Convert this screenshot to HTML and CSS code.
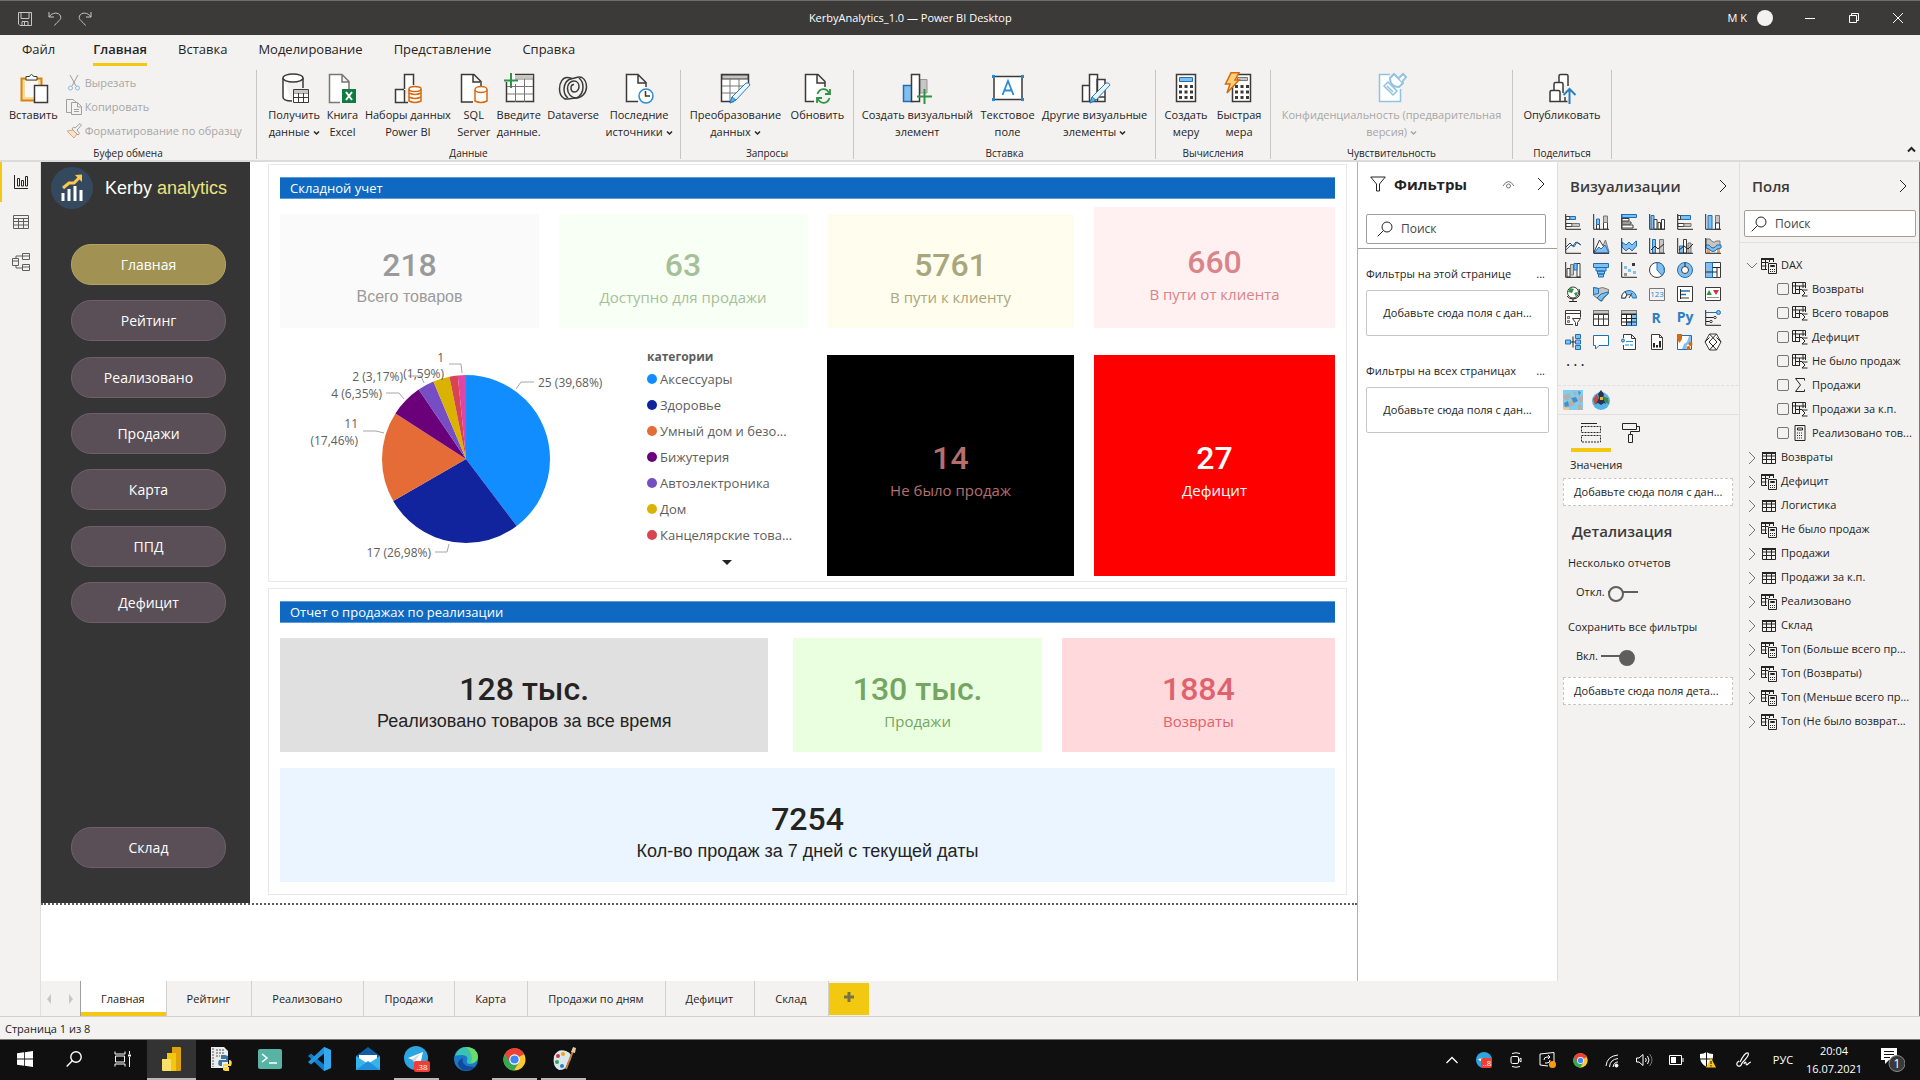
FILE: index.html
```html
<!DOCTYPE html>
<html lang="ru">
<head>
<meta charset="utf-8">
<meta name="viewport" content="width=device-width, initial-scale=1">
<title>KerbyAnalytics_1.0 — Power BI Desktop</title>
<link rel="stylesheet" href="styles.css">
</head>
<body>

<!-- shared icons -->
<svg class="defs" aria-hidden="true">
  <symbol id="i-table" viewBox="0 0 16 16"><path d="M1.500 2.500h13v11h-13zM1.500 6h13M1.500 9.500h13M5.500 3v10.500M10.500 3v10.500" class="ln"/><path d="M1 2h14v2H1z" fill="#252423"/></symbol>
  <symbol id="i-tcalc" viewBox="0 0 16 16"><path d="M6 11.500H.5V.5h12V4M.5 4.500h7M.5 8h5M4.500 1v10M8.500 1v3" class="ln"/><path d="M0 0h13v2H0z" fill="#252423"/><path d="M7.500 5.500h8v10h-8z" fill="#f3f2f1" stroke="#252423"/><path d="M9.500 7.500h4v1h-4z" class="ln"/><path d="M9 11.500h5M9 13.500h5" class="ln" stroke-dasharray="1 1"/></symbol>
  <symbol id="i-tsum" viewBox="0 0 16 16"><path d="M8 12.500H.5V1.500h13V7M.5 5h13M3.500 2v10.500M7.500 5v7M4 8.500h6M11 2v5" class="ln"/><path d="M15.500 9H10l3 3-3 3h5.500" class="ln"/></symbol>
  <symbol id="i-sum" viewBox="0 0 16 16"><path d="M12.500 3.500v-2h-9l5 6.500-5 6.500h9v-2" class="ln"/></symbol>
  <symbol id="i-calc" viewBox="0 0 16 16"><path d="M3 .5h10v15H3zM5.500 3h5v2h-5z" class="ln"/><path d="M5 8h6M5 10.500h6M5 13h6" class="ln" stroke-dasharray="1 1"/></symbol>
  <symbol id="i-right" viewBox="0 0 8 16"><path d="M1 2l6 6-6 6" class="ln"/></symbol>
  <symbol id="i-open" viewBox="0 0 12 8"><path d="M1 1l5 5 5-5" class="ln"/></symbol>
  <symbol id="i-caret" viewBox="0 0 7 6"><path d="M1 1.500l2.500 2.500L6 1.500" fill="none" stroke="currentColor" stroke-width="1.500"/></symbol>
  <symbol id="i-search" viewBox="0 0 16 16"><circle cx="10" cy="6" r="5" class="ln"/><path d="M6.500 9.500L.7 15.300" class="ln"/></symbol>
  <symbol id="i-chrome" viewBox="0 0 24 24"><circle cx="12" cy="12" r="11.500" fill="#fcc934"/><path d="M12 12L2 6.200A11.500 11.500 0 0 1 22 6.200z" fill="#ea4335"/><path d="M2 6.200A11.500 11.500 0 0 0 11.500 23.500l5-8.500L12 12z" fill="#34a853"/><path d="M12 6.500h10.200L22 6.200A11.500 11.500 0 0 0 2 6.200l5 8.500z" fill="#ea4335"/><circle cx="12" cy="12" r="5.500" fill="#fff"/><circle cx="12" cy="12" r="4.300" fill="#4285f4"/></symbol>
</svg>

<header class="titlebar">
  <div class="quick">
    <button aria-label="Сохранить"><svg width="16" height="16" viewBox="0 0 16 16"><path d="M1.500 1.500h13v13H3l-1.500-1.500zM4 1.500v6h8v-6M5 14.500v-4h6v4M7.500 11v3"/></svg></button>
    <button aria-label="Отменить"><svg width="16" height="16" viewBox="0 0 16 16"><path d="M2 1v5h5M2 6c3-5 10-5 11.500-1 1.500 4-3 5-6 9.500"/></svg></button>
    <button aria-label="Повторить"><svg width="16" height="16" viewBox="0 0 16 16"><path d="M14 1v5H9M14 6C11 1 4 1 2.500 5 1 9 5.500 10 8.500 14.500"/></svg></button>
  </div>
  <div class="title">KerbyAnalytics_1.0 — Power BI Desktop</div>
  <div class="window">
    <span>M K</span><i class="avatar"></i>
    <button aria-label="Свернуть"><svg width="12" height="12" viewBox="0 0 12 12"><path d="M1 6.500h10"/></svg></button>
    <button aria-label="Развернуть"><svg width="12" height="12" viewBox="0 0 12 12"><path d="M1.500 3.500h7v7h-7zM3.500 3V1.500h7v7H9"/></svg></button>
    <button aria-label="Закрыть"><svg width="12" height="12" viewBox="0 0 12 12"><path d="M1 1l10 10M11 1L1 11"/></svg></button>
  </div>
</header>

<nav class="menu">
  <button>Файл</button>
  <button class="on">Главная</button>
  <button>Вставка</button>
  <button>Моделирование</button>
  <button>Представление</button>
  <button>Справка</button>
</nav>

<div class="ribbon">
  <section class="group g-clip">
    <div class="tools">
      <button class="tool"><svg viewBox="0 0 32 32"><path d="M4.500 6.500h20v22h-20z" fill="#fbd99a" stroke="#d7830f" stroke-width="2"/><path d="M8 9h13v16H8z" fill="#faf9f8"/><path d="M9 8V4.500h3.500q2-4 4 0H20V8z" fill="#fff" stroke="#3b3a39"/><path d="M17.500 13.500h13v17h-13z" fill="#fff" stroke="#3b3a39" stroke-width="1.500"/></svg>Вставить</button>
      <div class="small-tools">
        <button disabled><svg viewBox="0 0 16 16"><path d="M4 0l6 11M12 0L6 11" stroke="#a19f9d"/><circle cx="4.500" cy="13" r="2" stroke="#8abbe0"/><circle cx="11.500" cy="13" r="2" stroke="#8abbe0"/></svg>Вырезать</button>
        <button disabled><svg viewBox="0 0 16 16"><path d="M5 13.500H.5V.5H7L10 3M5.500 3.500h6l4 4v8h-10zM11.500 4v4h4M8 10.500h5M8 12.500h5" stroke="#a19f9d"/></svg>Копировать</button>
        <button disabled><svg viewBox="0 0 16 16"><path d="M1 8l6-1 4 4-3 4z" fill="#fbe3c8" stroke="#e2a878"/><path d="M6 6l6 6 1.500-1.500L11 7l4.500-5-1.500-1.500L9 5 7.500 4z" stroke="#a19f9d"/></svg>Форматирование по образцу</button>
      </div>
    </div>
    <h2>Буфер обмена</h2>
  </section>
  <section class="group g-data">
    <div class="tools">
      <button class="tool"><svg viewBox="0 0 32 32"><path d="M5 6v19q0 4 9 4M25 6v10" class="dk"/><ellipse cx="15" cy="6" rx="10" ry="4" class="dk"/><path d="M15.500 17.500h15v13h-15zM15.500 21h15M15.500 25.500h15M20.500 21v9.500M25.500 21v9.500" stroke="#3b3a39" fill="#fff"/><path d="M16 18h14v3H16z" fill="#c8c6c4"/></svg>Получить<br>данные <svg class="caret"><use href="#i-caret"/></svg></button>
      <button class="tool"><svg viewBox="0 0 32 32"><path d="M14 30.500H3.500v-28H16l7 7V17M16 3v7h7" stroke="#797775" fill="#fff" stroke-width="1.500"/><path d="M16 17h14v14H16z" fill="#107c41"/><path d="M20 20l6 8M26 20l-6 8" stroke="#fff" stroke-width="2"/></svg>Книга<br>Excel</button>
      <button class="tool"><svg viewBox="0 0 32 32"><path d="M12.500 17V2.500h9V13M12 17.500H3.500v13H16M12.500 18v12" class="dk"/><path d="M17 17v12q6 3 12 0V17" fill="#fff" stroke="#d7690f" stroke-width="1.500"/><ellipse cx="23" cy="17" rx="6" ry="2.500" fill="#fff" stroke="#d7690f" stroke-width="1.500"/><path d="M17 21q6 3 12 0M17 25q6 3 12 0" fill="none" stroke="#d7690f" stroke-width="1.500"/></svg>Наборы данных<br>Power BI</button>
      <button class="tool"><svg viewBox="0 0 32 32"><path d="M15 30H3.500V2.500H16l7 7V14M15 3v7h7" class="dk"/><path d="M17 18v11q6 3 12 0V18" fill="#fff" stroke="#d7690f" stroke-width="1.500"/><ellipse cx="23" cy="17.500" rx="6" ry="3" fill="#fff" stroke="#d7690f" stroke-width="1.500"/></svg>SQL<br>Server</button>
      <button class="tool"><svg viewBox="0 0 32 32"><path d="M3.500 10v19.500h27v-27H12" fill="#fff" stroke="#3b3a39" stroke-width="1.500"/><path d="M12 3h18v3H12z" fill="#c8c6c4"/><path d="M12 7h18M4 14.500h26M4 22h26M12.500 12v18M21.500 7v23" stroke="#797775"/><path d="M1 8.500h14M8 1v15" stroke="#2f9447" stroke-width="2"/></svg>Введите<br>данные.</button>
      <button class="tool"><svg viewBox="0 0 32 32"><path d="M25 5.500c3 2 4.500 5.500 4.500 9.500 0 6-5 11-10 11-5.500 0-9-4.500-9-9.500C10.500 12 13.500 9 17 9c3 0 5 2.500 5 5.500S20 20 17.500 20 14 18 14 16s1-3.500 3-3.500M25 5.500C21 4 19 6 15.500 6.500 10 7 7 12 7 17c0 6 4 9 4 9" class="dv"/><path d="M7 26.500C4 24.500 2.500 21 2.500 17 2.500 10 6 5.500 10 5.500c2 0 3.500.5 5 1M7 26.500c3 1.500 6-.5 12.500-.5M19.500 26c4-2 6.500-6 6.500-11 0-4-1.500-7-4-9" class="dv"/></svg>Dataverse</button>
      <button class="tool"><svg viewBox="0 0 32 32"><path d="M15 29.500H3.500v-27H15l8 8V15M15 3v8h8" class="dk"/><circle cx="23" cy="24" r="7" fill="#fff" stroke="#2a8dd4" stroke-width="1.500"/><path d="M22.500 19v5H27" class="dk"/></svg>Последние<br>источники <svg class="caret"><use href="#i-caret"/></svg></button>
    </div>
    <h2>Данные</h2>
  </section>
  <section class="group g-query">
    <div class="tools">
      <button class="tool"><svg viewBox="0 0 32 32"><path d="M15 29.500H2.500v-27h27V12" fill="#fff" stroke="#3b3a39" stroke-width="1.500"/><path d="M3 3h26v4H3z" fill="#c8c6c4" stroke="#3b3a39"/><path d="M3 14h23M3 21h15M11 7v22M20 7v12" class="gr"/><path d="M11 31l2-6 14-14q3-1 4 2L17 28z" fill="#eaf4fc" stroke="#2a7fc1"/><path d="M11 31l2-6 4 3z" fill="#5fb0ec" stroke="#2a7fc1"/></svg>Преобразование<br>данных <svg class="caret"><use href="#i-caret"/></svg></button>
      <button class="tool"><svg viewBox="0 0 32 32"><path d="M13 29.500H4.500v-27H17l7 7V15M16 3v8h8" class="dk"/><path d="M29 17v5h-5M16 31v-5h5M16.500 22c2-6 9-7 12 0M28.500 26c-2 6-9 7-12 0" fill="none" stroke="#2f9447" stroke-width="1.800"/></svg>Обновить</button>
    </div>
    <h2>Запросы</h2>
  </section>
  <section class="group g-insert">
    <div class="tools">
      <button class="tool"><svg viewBox="0 0 32 32"><path d="M2.500 13.500h9v16h-9z" fill="#83bfee" stroke="#1d70b8" stroke-width="1.500"/><path d="M19 7.500h7V21h-7z" fill="#c8c6c4" stroke="#979593"/><path d="M10.500 2.500h8v27h-8z" class="dk"/><path d="M16 24.500h15M23.500 17v15" stroke="#2f9447" stroke-width="2"/></svg>Создать визуальный<br>элемент</button>
      <button class="tool"><svg viewBox="0 0 32 32"><path d="M2 4.500h28v23H2z" class="dk"/><path d="M10.500 23l5.500-14 5.500 14M12.500 18.500h7" fill="none" stroke="#2a8dd4" stroke-width="1.800"/><path d="M0 3h3v3H0zM29 3h3v3h-3zM0 26h3v3H0zM29 26h3v3h-3z" fill="#1d8ad6"/></svg>Текстовое<br>поле</button>
      <button class="tool"><svg viewBox="0 0 32 32"><path d="M3.500 13.500h7v16h-7zM18 7.500h8V25H18zM10.500 2.500h8v27h-8zM18 29.500h8V24" class="dk"/><path d="M11 31l2-6 14-14q3-1 4 2L17 28z" fill="#eaf4fc" stroke="#2a7fc1"/><path d="M11 31l2-6 4 3z" fill="#5fb0ec" stroke="#2a7fc1"/></svg>Другие визуальные<br>элементы <svg class="caret"><use href="#i-caret"/></svg></button>
    </div>
    <h2>Вставка</h2>
  </section>
  <section class="group g-calc">
    <div class="tools">
      <button class="tool"><svg viewBox="0 0 32 32"><path d="M6.500 2.500h19v27h-19z" class="dk"/><path d="M9.500 5.500h13v4h-13z" fill="#83bfee" stroke="#1d70b8"/><path d="M9 14.500h14M9 20h14M9 25.500h14" stroke="#3b3a39" stroke-width="3" stroke-dasharray="3 2.500"/></svg>Создать<br>меру</button>
      <button class="tool"><svg viewBox="0 0 32 32"><path d="M9.500 2.500h18v27h-18z" class="dk"/><path d="M14.500 5.500h10v3h-10z" fill="#c8c6c4" stroke="#797775"/><path d="M12 14.500h14M12 20h14M12 25.500h14" stroke="#3b3a39" stroke-width="3" stroke-dasharray="3 2.500"/><path d="M8 .8h8L12 8h4L4 21l3-9H2.500z" fill="#fbd27a" stroke="#d7690f" stroke-width="1.500"/></svg>Быстрая<br>мера</button>
    </div>
    <h2>Вычисления</h2>
  </section>
  <section class="group g-sens">
    <div class="tools">
      <button class="tool" disabled><svg viewBox="0 0 32 32"><path d="M15 2.500H4.500v27h21V17" fill="#fff" stroke="#90c3e0" stroke-width="1.500"/><path d="M9 14l4-4 9 9-4 4zM12 14l6 6" fill="#fff" stroke="#90c3e0" stroke-width="1.500"/><path d="M15 6l4-4 9 9-4 4q-9 0-9-9z" fill="#fff" stroke="#90c3e0" stroke-width="2"/><path d="M24 6l4-4 3 3-4 5" fill="#fff" stroke="#90c3e0" stroke-width="2"/></svg>Конфиденциальность (предварительная<br>версия) <svg class="caret"><use href="#i-caret"/></svg></button>
    </div>
    <h2>Чувствительность</h2>
  </section>
  <section class="group g-share">
    <div class="tools">
      <button class="tool"><svg viewBox="0 0 32 32"><path d="M13 10V4q0-1.500 1.500-1.500h6q1.500 0 1.500 1.500v10M8 18v-6q0-1.500 1.500-1.500h6q1.500 0 1.500 1.500v9M13.500 29.500h8M14 29V20q0-1.500-1.500-1.500h-7Q4 18.500 4 20v9.500h15V25" class="dk"/><path d="M23.500 32V17M17.500 23l6-6 6 6" fill="none" stroke="#2a7fc1" stroke-width="2"/></svg>Опубликовать</button>
    </div>
    <h2>Поделиться</h2>
  </section>
  <button class="collapse" aria-label="Свернуть ленту"><svg width="9" height="7" viewBox="0 0 9 7"><path d="M1 5.500L4.500 2 8 5.500" fill="none" stroke="#252423" stroke-width="2"/></svg></button>
</div>

<div class="workspace">
  <nav class="rail">
    <button class="on" aria-label="Отчет"><svg width="16" height="16" viewBox="0 0 16 16"><path d="M1.500 1v13.500H15M4.500 12V4.500h2V12zM8.500 12V6.500h2V12zM12.500 12V2.500h2V12z" stroke="#252423"/></svg></button>
    <button aria-label="Данные"><svg width="16" height="16" viewBox="0 0 16 16"><path d="M.5 1.500h15v13H.5zM.5 4.500h15M.5 7.500h15M.5 11h15M5.500 4.500v10M10.500 4.500v10" stroke="#605e5c"/></svg></button>
    <button aria-label="Модель"><svg width="18" height="18" viewBox="0 0 18 18"><path d="M.5 5.500h6v7h-6zM.5 8h6M10.500.5h7v6h-7zM10.500 3h7M10.500 11.500h7v6h-7zM10.500 14h7M4 5V3h6M4 13v2h6" stroke="#605e5c"/></svg></button>
  </nav>

  <div class="editor">
    <div class="canvas">
      <main class="report">
        <aside class="report-nav">
          <div class="brand">
            <svg width="42" height="42" viewBox="0 0 42 42"><circle cx="21" cy="21" r="21" fill="#34495e"/><path d="M12 34v-8M18 34V22M24 34V19M30 34V23" stroke="#fff" stroke-width="3"/><path d="M12 21l6-5h5l6-6" fill="none" stroke="#fdc84b" stroke-width="3"/><path d="M24 8l7-.5V15z" fill="#fdc84b"/></svg>
            <span>Kerby <b>analytics</b></span>
          </div>
          <div class="pages">
            <a class="on" href="#main">Главная</a>
            <a href="#rating">Рейтинг</a>
            <a href="#sold">Реализовано</a>
            <a href="#sales">Продажи</a>
            <a href="#map">Карта</a>
            <a href="#ppd">ППД</a>
            <a href="#deficit">Дефицит</a>
          </div>
          <a class="stock" href="#stock">Склад</a>
        </aside>

        <div class="boards">
          <section class="board">
            <h1>Складной учет</h1>
            <div class="stats">
              <div class="card c-total"><strong>218</strong><span>Всего товаров</span></div>
              <div class="card c-free"><strong>63</strong><span>Доступно для продажи</span></div>
              <div class="card c-way"><strong>5761</strong><span>В пути к клиенту</span></div>
              <div class="card c-back"><strong>660</strong><span>В пути от клиента</span></div>
              <div class="chart">
                <svg viewBox="0 -7 340 228" width="340" height="228">
                  <g class="pie" transform="rotate(-90 186 104)">
                    <circle cx="186" cy="104" r="42" pathLength="63" stroke="#118dff" stroke-dasharray="25 63"/>
                    <circle cx="186" cy="104" r="42" pathLength="63" stroke="#12239e" stroke-dasharray="17 63" stroke-dashoffset="-25"/>
                    <circle cx="186" cy="104" r="42" pathLength="63" stroke="#e66c37" stroke-dasharray="11 63" stroke-dashoffset="-42"/>
                    <circle cx="186" cy="104" r="42" pathLength="63" stroke="#6b007b" stroke-dasharray="4 63" stroke-dashoffset="-53"/>
                    <circle cx="186" cy="104" r="42" pathLength="63" stroke="#744ec2" stroke-dasharray="2 63" stroke-dashoffset="-57"/>
                    <circle cx="186" cy="104" r="42" pathLength="63" stroke="#d9b300" stroke-dasharray="2 63" stroke-dashoffset="-59"/>
                    <circle cx="186" cy="104" r="42" pathLength="63" stroke="#d64550" stroke-dasharray="1 63" stroke-dashoffset="-61"/>
                    <circle cx="186" cy="104" r="42" pathLength="63" stroke="#e044a7" stroke-dasharray="1 63" stroke-dashoffset="-62"/>
                  </g>
                  <path class="leads" d="M236 34l5-7h13M169 9h12l1 9M128 21h13l3 7M106 38h13l5 6M83 76h13l8 2M155 197h12l2-8"/>
                  <g class="labels">
                    <text x="258" y="32">25 (39,68%)</text>
                    <text x="164" y="7" text-anchor="end">1</text>
                    <text x="164" y="23" text-anchor="end">(1,59%)</text>
                    <text x="123" y="26" text-anchor="end">2 (3,17%)</text>
                    <text x="102" y="43" text-anchor="end">4 (6,35%)</text>
                    <text x="78" y="73" text-anchor="end">11</text>
                    <text x="78" y="90" text-anchor="end">(17,46%)</text>
                    <text x="151" y="202" text-anchor="end">17 (26,98%)</text>
                  </g>
                </svg>
                <div class="legend">
                  <h3>категории</h3>
                  <ul>
                    <li class="k1">Аксессуары</li>
                    <li class="k2">Здоровье</li>
                    <li class="k3">Умный дом и безо...</li>
                    <li class="k4">Бижутерия</li>
                    <li class="k5">Автоэлектроника</li>
                    <li class="k6">Дом</li>
                    <li class="k7">Канцелярские това...</li>
                  </ul>
                  <i class="more"></i>
                </div>
              </div>
              <div class="card big c-none"><strong>14</strong><span>Не было продаж</span></div>
              <div class="card big c-def"><strong>27</strong><span>Дефицит</span></div>
            </div>
          </section>

          <section class="board">
            <h1>Отчет о продажах по реализации</h1>
            <div class="sales">
              <div class="card c-sold"><strong>128 тыс.</strong><span>Реализовано товаров за все время</span></div>
              <div class="card c-sales"><strong>130 тыс.</strong><span>Продажи</span></div>
              <div class="card c-ret"><strong>1884</strong><span>Возвраты</span></div>
              <div class="card c-week"><strong>7254</strong><span>Кол-во продаж за 7 дней с текущей даты</span></div>
            </div>
          </section>
        </div>
      </main>
    </div>

    <aside class="filters">
      <header>
        <svg width="16" height="16" viewBox="0 0 16 16"><path d="M.7 1h14.600L9.500 8v7H6.500V8z" class="ln"/></svg>
        <h2>Фильтры</h2>
        <svg width="13" height="13" viewBox="0 0 13 13"><path d="M1 8q5.500-9 11 0" fill="none" stroke="#797775"/><circle cx="6.500" cy="8" r="2" fill="none" stroke="#797775"/></svg>
        <svg width="8" height="16"><use href="#i-right"/></svg>
      </header>
      <label class="search"><svg width="16" height="16"><use href="#i-search"/></svg><input type="text" placeholder="Поиск" aria-label="Поиск фильтров"></label>
      <div class="filter-list">
        <h3>Фильтры на этой странице <span>...</span></h3>
        <div class="drop">Добавьте сюда поля с дан...</div>
        <h3>Фильтры на всех страницах <span>...</span></h3>
        <div class="drop">Добавьте сюда поля с дан...</div>
      </div>
    </aside>

    <footer class="sheets">
      <span class="arrows"><i class="prev"></i><i class="next"></i></span>
      <button class="on">Главная</button>
      <button>Рейтинг</button>
      <button>Реализовано</button>
      <button>Продажи</button>
      <button>Карта</button>
      <button>Продажи по дням</button>
      <button>Дефицит</button>
      <button>Склад</button>
      <button class="add" aria-label="Новая страница"><svg width="12" height="12" viewBox="0 0 12 12"><path d="M6 1v10M1 6h10" stroke="#797244" stroke-width="3"/></svg></button>
    </footer>
  </div>

  <aside class="visuals">
    <header><h2>Визуализации</h2><svg width="8" height="16"><use href="#i-right"/></svg></header>
    <div class="viz-grid">
      <svg viewBox="0 0 16 16"><path d="M.7 0v15.300H16" class="ln"/><path d="M1 2.500h4v3H1z" class="w"/><path d="M5 2.500h5.500v3H5z" class="b"/><path d="M1 9.500h6v3H1z" class="w"/><path d="M7 9.500h7.500v3H7z" class="g"/></svg>
      <svg viewBox="0 0 16 16"><path d="M.7 0v15.300H16" class="ln"/><path d="M3.500 10.500h3V15h-3z" class="w"/><path d="M3.500 5h3v5.500h-3z" class="b"/><path d="M10.500 8.500h4V15h-4z" class="w"/><path d="M10.500 2h4v6.500h-4z" class="g"/></svg>
      <svg viewBox="0 0 16 16"><path d="M.7 0v15.300H16" class="ln"/><path d="M1 .5h14.500v3H1z" class="b"/><path d="M1 4.500h7v2.500H1zM1 8h9v2H1zM1 11h11v3H1z" class="w"/></svg>
      <svg viewBox="0 0 16 16"><path d="M.7 0v15.300H16" class="ln"/><path d="M2 1.500h3V15H2z" class="b"/><path d="M5 5.500h3V15H5zM9 8.500h2.500V15H9zM12.500 5.500h3V15h-3z" class="w"/></svg>
      <svg viewBox="0 0 16 16"><path d="M.7 0v15.300H16" class="ln"/><path d="M3.500 1.500h10v4h-10z" class="b"/><path d="M1 9.500h6v3H1zM1 1.500h2.500v4H1z" class="w"/><path d="M7 9.500h7v3H7z" class="g"/></svg>
      <svg viewBox="0 0 16 16"><path d="M.7 0v15.300H16" class="ln"/><path d="M3 1.500h4V15H3z" class="b"/><path d="M10.500 1.500h4V9h-4z" class="g"/><path d="M10.500 9h4v6h-4z" class="w"/></svg>
      <svg viewBox="0 0 16 16"><path d="M.7 0v15.300H16" class="ln"/><path d="M1 9l4-4 3 3 3-4 5 3" fill="none" stroke="#3b3a39"/><path d="M1 12l5-5 3 2 3-5 3 2" fill="none" stroke="#1d70b8"/></svg>
      <svg viewBox="0 0 16 16"><path d="M9 10l3.500-8L16 14z" class="g"/><path d="M1 14L6.500 2 12 11z" class="w"/><path d="M1 15l5-6 2 2 4-4 4 8z" class="b"/><path d="M.7 0v15.300H16" class="ln"/></svg>
      <svg viewBox="0 0 16 16"><path d="M1 4l4 3 3-3 3 3 4-4h.5v5L11 13 8 10l-3 3-4-4z" class="b"/><path d="M.7 0v15.300H16" class="ln"/></svg>
      <svg viewBox="0 0 16 16"><path d="M3.500 1.500h3V15h-3z" class="b"/><path d="M10.500 1.500h4V15h-4z" class="g"/><path d="M2 12l4-4 3 3 6-5" fill="none" stroke="#252423"/><path d="M.7 0v15.300H16" class="ln"/></svg>
      <svg viewBox="0 0 16 16"><path d="M2.500 8h4v7h-4z" class="b"/><path d="M6.500 1.500h3V15h-3z" class="w"/><path d="M11 5h3v10h-3z" class="g"/><path d="M2 12l5-4 4 3 5-5" fill="none" stroke="#252423"/><path d="M.7 0v15.300H16" class="ln"/></svg>
      <svg viewBox="0 0 16 16"><path d="M1 1h4q3 5 6 2h4v5h-3q-4 5-8 0H1z" class="g"/><path d="M2 10h3v5H2zM12 10h3v5h-3z" fill="#f29f4b"/><path d="M1 7h3q4 6 8 0h4v3l-4 1q-4 5-8 0l-3-1z" class="b"/><path d="M.7 0v15.300H16" class="ln"/></svg>

      <svg viewBox="0 0 16 16"><path d="M2 6.500h3V15H2zM12 1.500h3V15h-3z" class="w"/><path d="M5.500 2.500h3V13h-3z" class="g"/><path d="M9 1.500h3V8H9z" class="b"/><path d="M.7 0v15.300H16" class="ln"/></svg>
      <svg viewBox="0 0 16 16"><path d="M.5 1.500h15v4H.5zM3 5.500h10v3.500H3zM4.500 9h7v3h-7zM5.500 12h5v3h-5z" class="b"/></svg>
      <svg viewBox="0 0 16 16"><path d="M.7 0v15.300H16" class="ln"/><path d="M3 4h3v3H3zM7 7h3v3H7zM12 9h3v3h-3z" fill="#83bfee"/><path d="M11 1h3v3h-3z" fill="#3b3a39"/><path d="M3 11h3v3H3z" fill="#979593"/></svg>
      <svg viewBox="0 0 16 16"><circle cx="8" cy="8" r="7.500" class="w"/><path d="M8 .5a7.500 7.500 0 0 1 5 13L8 8z" class="b"/></svg>
      <svg viewBox="0 0 16 16"><circle cx="8" cy="8" r="7.500" class="b"/><circle cx="8" cy="8" r="3.500" class="w"/><path d="M8 .5v4" class="ln"/></svg>
      <svg viewBox="0 0 16 16"><path d="M.5.500h15v15H.5z" class="w"/><path d="M.5.500h7v15h-7z" class="b"/><path d="M.5 10h7M7.500 5.500h8M12 5.500v10M7.500 10H12" class="ln"/></svg>
      <svg viewBox="0 0 16 16"><circle cx="8" cy="6.500" r="5.500" class="w"/><path d="M5 2l4 1-2 4-4-1zM9 7l4-1-2 5z" fill="#2f9447"/><path d="M14 3q3 9-6 10-4 0-6-3M8 13v2.500M4 15.500h8" class="ln"/></svg>
      <svg viewBox="0 0 16 16"><path d="M.5 1.500l5 1 4-1 6 2v4l-4 4-3 4-4-3-4-3z" class="g"/><path d="M.5 1.500l5 1v5l-5 1zM8 8l7-2v2l-4 3-3 4-4-3z" class="b"/></svg>
      <svg viewBox="0 0 16 16"><path d="M.5 12a7.500 7.500 0 0 1 15 0h-4a3.500 3.500 0 0 0-7 0z" class="b"/><path d="M.5 12A7.500 7.500 0 0 1 4 5.500L6 9q-1.500 1-1.500 3zM8 12l3-5" class="w"/></svg>
      <svg viewBox="0 0 16 16"><path d="M.5 2.500h15v12H.5z" class="g2"/><text x="8" y="11" text-anchor="middle" class="num">123</text></svg>
      <svg viewBox="0 0 16 16"><path d="M.5.500h15v15H.5z" class="w"/><path d="M3.500 3v10" class="ln"/><path d="M4 5h9M4 8.500h5" stroke="#1d70b8" stroke-width="1.500"/><path d="M4 12h8" stroke="#3b3a39"/></svg>
      <svg viewBox="0 0 16 16"><path d="M.5 1.500h15v13H.5z" class="w"/><path d="M1.500 9l2.500-5 3 5z" fill="#2f9447"/><path d="M8 4h6l-3 5z" fill="#d13438"/><path d="M2 11.500h12" stroke="#979593"/></svg>
      <svg viewBox="0 0 16 16"><path d="M8 14.500H.5V.5h15v7M.5 3.500h15" class="w"/><path d="M2.500 6.500h2v2h-2zM2.500 10.500h2v2h-2z" class="g"/><path d="M7.500 8.500h8l-3 4v3h-2v-3z" class="w"/></svg>
      <svg viewBox="0 0 16 16"><path d="M.5.500h15v15H.5zM.5 4.500h15M.5 9h15M5.500 4.500v11M10.500 4.500v11" class="w"/><path d="M.5.500h15v3H.5z" class="g"/></svg>
      <svg viewBox="0 0 16 16"><path d="M.5.500h15v15H.5z" class="w"/><path d="M10.500 4.500h5v11h-10V12h5z" class="b"/><path d="M.5 4.500h15M.5 8.500h15M.5 12h15M5.500 4.500v11M10.500 4.500v11" class="ln"/><path d="M.5.500h15v3H.5z" class="g"/></svg>
      <svg viewBox="0 0 16 16"><text x="7" y="13" text-anchor="middle" class="lang">R</text></svg>
      <svg viewBox="0 0 16 16"><text x="8" y="12" text-anchor="middle" class="lang">Py</text></svg>
      <svg viewBox="0 0 16 16"><path d="M.7 0v15.300H16M1 7.500h9M1 11.500h4" class="ln"/><path d="M1 2.500h11" stroke="#1d70b8"/><circle cx="13.500" cy="2.500" r="2" class="b"/><circle cx="10" cy="7.500" r="1.200" class="w"/><circle cx="6" cy="11.500" r="1.200" class="w"/></svg>

      <svg viewBox="0 0 16 16"><path d="M5 8h5M8 2.500v11" class="ln"/><path d="M.5 6h5v4h-5zM10.500.5h5v4h-5zM10.500 6h5v4h-5zM10.500 11.500h5v4h-5z" class="b"/></svg>
      <svg viewBox="0 0 16 16"><path d="M.5 1.500h15v10H6L2.500 15v-3.500h-2z" fill="#fff" stroke="#1d70b8"/></svg>
      <svg viewBox="0 0 16 16"><path d="M2.500 4V.5h8l4 4v11h-12V11M10.500.5v4h4" class="w"/><circle cx="2" cy="6.500" r="1.500" class="b"/><path d="M5 7.500h7M4 11h4M9 11h3" stroke="#1d8ad6"/></svg>
      <svg viewBox="0 0 16 16"><path d="M2.500.5h8l3 3v12h-11zM10.500.5v3h3" class="w"/><path d="M5 9v4.500M8 11v2.500M11 7v6.500" stroke="#252423" stroke-width="2"/></svg>
      <svg viewBox="0 0 16 16"><path d="M.5 1.500h14v14H.5z" fill="#fff" stroke="#1d70b8"/><path d="M12 2h2v7l-4 2-1 4H5l2-5 3-2z" fill="#83bfee"/><path d="M0 0h5v5L2.500 9 0 5z" fill="#d7690f"/><circle cx="13.500" cy="10" r="2" fill="#d7690f"/><circle cx="11.500" cy="14" r="2" fill="#d7690f"/></svg>
      <svg viewBox="0 0 16 16"><path d="M4.500 0h7L16 8l-4.500 8h-7L0 8z" class="w"/><path d="M4.500 0L12 8l-4 4-4-4 7.500-8M4.500 16L8 12l3.500 4M0 8l4.500-4.500M16 8l-4.500-4.500" class="ln"/></svg>
    </div>
    <div class="dots">...</div>
    <div class="custom">
      <svg width="20" height="20" viewBox="0 0 20 20"><path d="M0 0h20v20H0z" fill="#7fcdf0"/><path d="M0 6l6-3 2 5-5 3zM9 1l5 1-2 5zM15 8l5-3v7l-4 1zM5 12l5-2 2 5-6 2zM14 15l4-1 2 6h-5z" fill="#b3b0ad"/><path d="M8 8l5-1 2 4-4 2zM1 13l4-2 1 5-4 1zM15 1l3 1-2 4z" fill="#4a8fc4"/><path d="M0 17l6 1v2H0z" fill="#f9c784"/></svg>
      <svg width="20" height="20" viewBox="0 0 20 20"><circle cx="10" cy="11" r="9" fill="#56b3ea"/><path d="M2 9l4-5 2 6-4 5z" fill="#c04b34"/><path d="M11 6l6 2 1 6-4-2z" fill="#3c8a46"/><path d="M10 0l3 4-1 4 3 6-2-1-3 2-3-2-2 1 3-6-1-4z" fill="#2c3550"/><path d="M9 7h3v3H9z" fill="#e0b53c"/></svg>
    </div>
    <div class="viz-tabs">
      <button class="on" aria-label="Поля"><svg width="20" height="20" viewBox="0 0 20 20"><path d="M0 .5h16" class="ln"/><path d="M.5 3.500h19v6H.5zM.5 12.500h19v6.500H.5z" class="ln" stroke-dasharray="2 1"/></svg></button>
      <button aria-label="Формат"><svg width="20" height="20" viewBox="0 0 20 20"><path d="M1.500.5h14v6h-14zM15.500 3.500h3v5h-9v3M7.500 11.500h4v8h-4z" class="ln"/></svg></button>
    </div>
    <h3 class="values">Значения</h3>
    <div class="well">Добавьте сюда поля с дан...</div>
    <h2 class="drill">Детализация</h2>
    <h3>Несколько отчетов</h3>
    <label class="toggle">Откл. <input type="checkbox"></label>
    <h3>Сохранить все фильтры</h3>
    <label class="toggle">Вкл. <input type="checkbox" checked></label>
    <div class="well">Добавьте сюда поля дета...</div>
  </aside>

  <aside class="fields">
    <header><h2>Поля</h2><svg width="8" height="16"><use href="#i-right"/></svg></header>
    <label class="search"><svg width="16" height="16"><use href="#i-search"/></svg><input type="text" placeholder="Поиск" aria-label="Поиск полей"></label>
    <ul class="tree">
      <li><svg class="arr down"><use href="#i-open"/></svg><svg><use href="#i-tcalc"/></svg>DAX
        <ul>
          <li><label><input type="checkbox"><svg><use href="#i-tsum"/></svg>Возвраты</label></li>
          <li><label><input type="checkbox"><svg><use href="#i-tsum"/></svg>Всего товаров</label></li>
          <li><label><input type="checkbox"><svg><use href="#i-tsum"/></svg>Дефицит</label></li>
          <li><label><input type="checkbox"><svg><use href="#i-tsum"/></svg>Не было продаж</label></li>
          <li><label><input type="checkbox"><svg><use href="#i-sum"/></svg>Продажи</label></li>
          <li><label><input type="checkbox"><svg><use href="#i-tsum"/></svg>Продажи за к.п.</label></li>
          <li><label><input type="checkbox"><svg><use href="#i-calc"/></svg>Реализовано тов...</label></li>
        </ul>
      </li>
      <li><svg class="arr"><use href="#i-right"/></svg><svg><use href="#i-table"/></svg>Возвраты</li>
      <li><svg class="arr"><use href="#i-right"/></svg><svg><use href="#i-tcalc"/></svg>Дефицит</li>
      <li><svg class="arr"><use href="#i-right"/></svg><svg><use href="#i-table"/></svg>Логистика</li>
      <li><svg class="arr"><use href="#i-right"/></svg><svg><use href="#i-tcalc"/></svg>Не было продаж</li>
      <li><svg class="arr"><use href="#i-right"/></svg><svg><use href="#i-table"/></svg>Продажи</li>
      <li><svg class="arr"><use href="#i-right"/></svg><svg><use href="#i-table"/></svg>Продажи за к.п.</li>
      <li><svg class="arr"><use href="#i-right"/></svg><svg><use href="#i-tcalc"/></svg>Реализовано</li>
      <li><svg class="arr"><use href="#i-right"/></svg><svg><use href="#i-table"/></svg>Склад</li>
      <li><svg class="arr"><use href="#i-right"/></svg><svg><use href="#i-tcalc"/></svg>Топ (Больше всего пр...</li>
      <li><svg class="arr"><use href="#i-right"/></svg><svg><use href="#i-tcalc"/></svg>Топ (Возвраты)</li>
      <li><svg class="arr"><use href="#i-right"/></svg><svg><use href="#i-tcalc"/></svg>Топ (Меньше всего пр...</li>
      <li><svg class="arr"><use href="#i-right"/></svg><svg><use href="#i-tcalc"/></svg>Топ (Не было возврат...</li>
    </ul>
  </aside>
</div>

<div class="status">Страница 1 из 8</div>

<footer class="taskbar">
  <div class="apps">
    <button aria-label="Пуск"><svg width="16" height="16" viewBox="0 0 16 16"><path d="M0 2.300L7 1.300V7.600H0zM7.800 1.200L16 0v7.600H7.800zM0 8.400h7v6.300l-7-1zM7.800 8.400H16V16l-8.200-1.200z" fill="#fff"/></svg></button>
    <button aria-label="Поиск"><svg width="16" height="16" viewBox="0 0 16 16" fill="none" stroke="#fff" stroke-width="1.400"><circle cx="10" cy="6" r="5.200"/><path d="M6.500 9.500L.7 15.500"/></svg></button>
    <button aria-label="Представление задач"><svg width="17" height="16" viewBox="0 0 17 16" fill="none" stroke="#fff"><path d="M1 .5V3h10V.5M1 15.500V13h10v2.500M1.500 5h9v6h-9zM15.500 0v3M15.500 6v10"/><path d="M14 3.500h3v2h-3z" fill="#fff" stroke="none"/></svg></button>
    <button class="current" aria-label="Power BI"><svg width="24" height="24" viewBox="0 0 24 24"><path d="M12 0h8q1 0 1 1v22q0 1-1 1h-8z" fill="#e0a20c"/><path d="M7 6h8q1 0 1 1v17H7z" fill="#f2c811"/><path d="M2 12h8q1 0 1 1v11H3q-1 0-1-1z" fill="#fbe06a"/></svg></button>
    <button aria-label="Python"><svg width="24" height="24" viewBox="0 0 24 24"><path d="M2 0h13l4 4v17H2z" fill="#ececec"/><path d="M4 1v19M7 3h8M7 6h8M7 9h4" stroke="#555" stroke-dasharray="2 1"/><path d="M16 8h-4v4h5v1h-7q-2 5 1 6h2v-4h6V9z" fill="#3874a8"/><path d="M16 24h4v-4h-5v-1h7q2-5-1-6h-1v4h-6v6z" fill="#ffd343"/></svg></button>
    <button aria-label="Терминал"><svg width="24" height="20" viewBox="0 0 24 20"><rect width="24" height="20" rx="2" fill="#59b3a5"/><path d="M4 5l5 4-5 4M11 14h8" fill="none" stroke="#fff" stroke-width="1.500"/></svg></button>
    <button aria-label="Visual Studio Code"><svg width="24" height="24" viewBox="0 0 24 24"><path d="M17 0l7 3v18l-7 3L1 9l3-2.500 13 11z" fill="#0f7dc9"/><path d="M17 0v6.500L4 17.500 1 15z" fill="#2593dd"/><path d="M17 0l7 3v18l-7 3z" fill="#33a9f0"/></svg></button>
    <button aria-label="Почта"><svg width="24" height="24" viewBox="0 0 24 24"><path d="M12 0l12 9v14H0V9z" fill="#0f5ea8"/><path d="M3 8h18v9H3z" fill="#fff"/><path d="M0 9l12 8 12-8v14H0z" fill="#35b3ee"/><path d="M0 23l12-9 12 9z" fill="#1e90dc"/></svg></button>
    <button class="open" aria-label="Telegram"><svg width="26" height="26" viewBox="0 0 26 26"><circle cx="12" cy="12" r="12" fill="#2ca5e0"/><path d="M4 12l15-6-3 13-5-4z" fill="#fff"/><path d="M8 13l8-5-5 7v3z" fill="#c8daea"/><rect x="10" y="15" width="16" height="11" rx="2" fill="#f23c34"/><text x="18" y="24" text-anchor="middle" class="badge">.38</text></svg></button>
    <button aria-label="Edge"><svg width="24" height="24" viewBox="0 0 24 24"><circle cx="12" cy="12" r="12" fill="#1b78c9"/><path d="M1 9Q4 0 12 0q11 0 12 10-1 7-8 7-4 0-3-3 2-6-5-6-5 0-7 1z" fill="#39c3b0"/><path d="M12 0q11 0 12 10-1 6-7 6 3-9-5-16z" fill="#6bdc6a"/><path d="M9 11q-3 9 12 9-7 6-14 2-7-7 2-11z" fill="#114a9a"/></svg></button>
    <button class="open" aria-label="Chrome"><svg width="23" height="23"><use href="#i-chrome"/></svg></button>
    <button class="open" aria-label="Paint"><svg width="24" height="24" viewBox="0 0 24 24"><path d="M2 9Q6 1 14 4q8 3 4 10-3 1-3 4-1 5-8 5-7-3-5-14z" fill="#d8e8f0"/><circle cx="6" cy="9" r="2" fill="#d13438"/><circle cx="11" cy="7" r="2" fill="#f2a20c"/><circle cx="5" cy="15" r="2" fill="#3f9c49"/><circle cx="10" cy="19" r="2" fill="#2a7fc1"/><path d="M21 4l-7 18" stroke="#c9782b" stroke-width="2"/><path d="M19 5l2-5 3 1-1 5z" fill="#e8c79a"/></svg></button>
  </div>
  <div class="tray">
    <button aria-label="Скрытые значки"><svg width="12" height="8" viewBox="0 0 12 8" fill="none" stroke="#fff" stroke-width="1.300"><path d="M.5 7L6 1.500 11.500 7"/></svg></button>
    <button aria-label="Telegram"><svg width="17" height="17" viewBox="0 0 17 17"><circle cx="8" cy="8" r="8" fill="#2ca5e0"/><path d="M2 7l6-1v3H4z" fill="#fff"/><rect x="5" y="6" width="11" height="10" rx="2" fill="#f23c34"/><text x="11" y="14" text-anchor="middle" class="badge">..8</text></svg></button>
    <button aria-label="Камера"><svg width="16" height="16" viewBox="0 0 16 16" fill="none" stroke="#fff"><rect x="3" y="4.500" width="7.500" height="7" rx="1.500"/><path d="M10.500 8l2.500-2v4zM4 1.500q4-1.500 8 0M4 14.500q4 1.500 8 0"/></svg></button>
    <button aria-label="Обновление"><svg width="18" height="17" viewBox="0 0 18 17" fill="none" stroke="#fff"><path d="M1 2l14-1.500V10M1 2v11l8 1M5 8q0-3 3-3h3M9 3l2 2-2 2M11 8q0 3-3 3H6"/><circle cx="13.500" cy="12.500" r="3.500" fill="#ff9b0f" stroke="none"/></svg></button>
    <button aria-label="Chrome"><svg width="15" height="15"><use href="#i-chrome"/></svg></button>
    <button aria-label="Сеть"><svg width="15" height="15" viewBox="0 0 15 15" fill="none" stroke="#fff"><path d="M1 13Q2 3 13 2M4.500 14Q5 6.500 13 5.500M8 14q1-5 5-5"/><circle cx="11.500" cy="12.500" r="1.500" fill="#fff"/></svg></button>
    <button aria-label="Громкость"><svg width="17" height="14" viewBox="0 0 17 14" fill="none" stroke="#fff"><path d="M.5 5v4H3l4 3.500v-11L3 5zM9.500 5q1.500 2 0 4M11.500 3q3 4 0 8"/><path d="M13.500 1q5 6 0 12" stroke="#777"/></svg></button>
    <button aria-label="Батарея"><svg width="15" height="10" viewBox="0 0 15 10" fill="none" stroke="#fff"><path d="M.5.500h12v9H.5zM14 3v4"/><path d="M2 2h5v6H2z" fill="#fff" stroke="none"/></svg></button>
    <button aria-label="Безопасность"><svg width="16" height="16" viewBox="0 0 16 16"><path d="M0 2q4 0 6.500-2Q9 2 13 2q1 9-6.500 13Q-1 11 0 2z" fill="#fff"/><path d="M6.500 0v15M0 7h13" stroke="#111"/><path d="M11 6l5 9.500H6z" fill="#fcc419"/><path d="M11 9v3M11 13v1.500" stroke="#111"/></svg></button>
    <button class="pen" aria-label="Перо"><svg width="16" height="16" viewBox="0 0 16 16" fill="none" stroke="#fff" stroke-width="1.200"><path d="M4 10Q9 0 12 1q2 2-6 10M3 9q-4 3-1 5 3 1 4-3M8 12q1-3 2-1 0 3 2 1t3-2"/></svg></button>
    <span class="lang-sw">РУС</span>
    <span class="clock">20:04<br>16.07.2021</span>
    <button class="notes" aria-label="Уведомления"><svg width="24" height="24" viewBox="0 0 24 24"><path d="M0 0h16v12H8l-4 4v-4H0z" fill="#fff"/><path d="M3 3.500h10M3 6.500h10M3 9.500h6" stroke="#111"/><circle cx="16" cy="15.500" r="8" fill="#3a3a3a" stroke="#8a8a8a"/><text x="16" y="20" text-anchor="middle" class="count">1</text></svg></button>
  </div>
</footer>
</body>
</html>
```

FILE: styles.css
```css
* {
  box-sizing: border-box;
}

body {
  margin: 0;
  height: 100vh;
  display: flex;
  flex-direction: column;
  overflow: hidden;
  background: #f3f2f1;
  color: #252423;
  font-family: "Open Sans", "Noto Sans", sans-serif;
  font-size: 11px;
  line-height: 16px;
}

button {
  padding: 0;
  border: 0;
  background: none;
  color: inherit;
  font: inherit;
}

h1, h2, h3, ul {
  margin: 0;
  padding: 0;
  font-weight: normal;
  font-size: inherit;
  list-style: none;
}

svg { flex: none; }
.defs { position: absolute; width: 0; height: 0; }

.ln { fill: none; stroke: #252423; }
.dk { fill: #fff; stroke: #3b3a39; stroke-width: 1.5; }
.dv { fill: none; stroke: #3b3a39; stroke-width: 1.5; }
.gr { fill: none; stroke: #797775; }
.w { fill: #fff; stroke: #3b3a39; }
.g { fill: #c8c6c4; stroke: #797775; }
.g2 { fill: #f3f2f1; stroke: #797775; }
.b { fill: #83bfee; stroke: #1d70b8; }
.num { font-size: 8px; fill: #1d8ad6; }
.lang { font-size: 14px; font-weight: bold; fill: #2a7fc1; }

/* title bar */
.titlebar {
  display: flex;
  align-items: center;
  height: 35px;
  border-top: 1px solid #6e6d6b;
  background: #3b3a38;
  color: #fff;
}
.titlebar svg { display: block; fill: none; stroke: currentColor; }
.title { flex: 1; text-align: center; }
.quick { display: flex; gap: 14px; padding: 2px 0 0 17px; color: #c8c6c4; }
.window { display: flex; align-items: center; justify-content: flex-end; }
.window button { width: 44px; display: flex; justify-content: center; }
.avatar { width: 16px; height: 16px; margin: 0 15px 0 10px; border-radius: 50%; background: #f3f2f1; }

/* menu */
.menu {
  display: flex;
  gap: 31px;
  height: 33px;
  padding: 0 22px;
  font-size: 13px;
}
.menu button { border-bottom: 3px solid transparent; margin-bottom: 2px; }
.menu button.on { border-color: #f2c811; font-weight: 600; margin-left: 7px; }

/* ribbon */
.ribbon {
  display: flex;
  height: 94px;
  padding: 2px 0 1px;
  border-bottom: 2px solid #dddbd9;
}
.group {
  display: flex;
  flex-direction: column;
  justify-content: space-between;
  padding: 2px 4px 0;
  border-right: 1px solid #c8c6c4;
}
.group h2 { font-size: 10px; line-height: 12px; text-align: center; }
.g-clip { width: 257px; }
.g-data { width: 424px; }
.g-query { width: 173px; }
.g-insert { width: 302px; }
.g-calc { width: 115px; }
.g-sens { width: 242px; }
.g-share { width: 99px; }
.tools { display: flex; justify-content: space-around; }
.g-clip .tools { justify-content: flex-start; gap: 8px; padding-left: 5px; }
.g-data .tools { padding-left: 4px; }
.tool { display: block; line-height: 17px; text-align: center; white-space: nowrap; align-self: flex-start; }
.tool > svg { display: block; width: 32px; height: 32px; margin: 0 auto 2px; }
.tool > svg.caret { display: inline; width: 7px; height: 6px; margin: 0; }
.ribbon button:disabled { color: #a8a6a4; }
.small-tools { display: flex; flex-direction: column; gap: 8px; padding-top: 3px; }
.small-tools button { display: flex; align-items: center; gap: 3px; }
.small-tools svg { width: 16px; height: 16px; fill: none; }
.collapse { margin: auto 4px 2px auto; }

.workspace { display: flex; flex: 1; min-height: 0; }

.rail { width: 41px; border-right: 1px solid #e1dfdd; }
.rail button { display: flex; align-items: center; justify-content: center; width: 40px; height: 40px; border-left: 2px solid transparent; }
.rail button.on { border-color: #f2c811; }
.rail svg { fill: none; }

.editor {
  flex: 1;
  display: grid;
  grid-template: 1fr 35px / 1fr 201px;
  min-width: 0;
}
.canvas { background: #fff; }

/* report page */
.report { display: flex; border-bottom: 2px dotted #605e5c; }
.report-nav {
  width: 209px;
  display: flex;
  flex-direction: column;
  align-items: center;
  padding: 5px 0 35px 6px;
  background: #353535;
}
.brand { align-self: stretch; display: flex; align-items: center; gap: 12px; padding-left: 4px; color: #fff; font: 18px/42px "Liberation Sans", Arial, sans-serif; }
.brand b { font-weight: normal; color: #ece27e; }
.pages { display: flex; flex-direction: column; justify-content: space-between; height: 379px; margin-top: 35px; }
.report-nav a {
  width: 155px;
  height: 41px;
  border: 1px solid #6e5f69;
  border-radius: 20px;
  background: #5b4f57;
  color: #fff;
  font-size: 14px;
  line-height: 39px;
  text-align: center;
  text-decoration: none;
}
.report-nav a.on { background: #a19253; border-color: #b3a363; }
.report-nav .stock { margin-top: auto; }

.boards { flex: 1; display: flex; flex-direction: column; gap: 6px; padding: 2px 10px 8px 18px; }
.board { padding: 12px 11px 5px; border: 1px solid #e8e8e8; }
.board + .board { padding-bottom: 12px; }
.board h1 {
  height: 22px;
  padding-left: 10px;
  border: 1px solid #5a9bdb;
  border-width: 1px 0;
  background: #0f69c2;
  color: #fff;
  font-size: 13px;
  line-height: 20px;
}
.stats {
  display: grid;
  grid-template-columns: 259fr 248fr 247fr 241fr;
  align-items: end;
  gap: 20px;
  margin-top: 8px;
}
.sales { display: grid; grid-template-columns: 493fr 248fr 273fr; gap: 16px 20px; margin-top: 15px; }
.card {
  display: flex;
  flex-direction: column;
  align-items: center;
  justify-content: center;
  height: 114px;
  padding-top: 12px;
  font-size: 15px;
  line-height: 24px;
}
.card strong { font: 500 32px/40px Roboto, sans-serif; }
.c-back { height: 121px; }
.card.big { height: 221px; padding-top: 8px; }
.c-total { background: #fafafa; color: #9a9a9a; }
.c-free { background: #f8fff4; color: #a6bf98; }
.c-way { background: #fffeee; color: #a9a67c; }
.c-back { background: #fff0f1; color: #d98489; }
.c-none { background: #000; color: #b5706e; }
.c-def { background: #f00; color: #fff; }
.c-sold { margin-right: 5px; background: #e0e0e0; color: #252423; }
.c-sales { background: #eaffe0; color: #74a562; }
.c-ret { background: #ffd9dc; color: #df626d; }
.c-week { grid-column: 1 / -1; background: #eaf5ff; color: #252423; }
.c-total span { font: 16px/24px "Liberation Sans", Arial, sans-serif; }
.c-sold span, .c-week span { font: 18px/24px "Liberation Sans", Arial, sans-serif; }

.chart { grid-column: span 2; display: flex; justify-content: space-between; }
.chart > svg { overflow: visible; }
.pie circle { fill: none; stroke-width: 84; }
.leads { fill: none; stroke: #a6a6a6; }
.labels { font-size: 12px; fill: #605e5c; }
.legend { width: 160px; color: #605e5c; font-size: 13px; white-space: nowrap; }
.legend h3 { font-size: 12px; font-weight: bold; line-height: 18px; }
.legend li { display: flex; align-items: center; gap: 3px; height: 26px; }
.legend li::before { content: ""; width: 10px; height: 10px; border-radius: 50%; background: currentColor; }
.legend .k1::before { background: #118dff; }
.legend .k2::before { background: #12239e; }
.legend .k3::before { background: #e66c37; }
.legend .k4::before { background: #6b007b; }
.legend .k5::before { background: #744ec2; }
.legend .k6::before { background: #d9b300; }
.legend .k7::before { background: #d64550; }
.more { display: block; width: 10px; margin: 12px auto 0; border: 5px solid transparent; border-top-color: #252423; border-bottom: 0; }

/* filters */
.filters { background: #fff; border: 1px solid #b3b0ad; border-width: 0 1px; border-right-color: #e1dfdd; }
.filters header { display: flex; align-items: center; height: 44px; padding: 0 12px 0 12px; }
.filters h2 { flex: 1; padding-left: 8px; font-size: 15px; font-weight: bold; }
.filters header svg + svg { margin-left: 22px; }
.search { display: flex; align-items: center; gap: 8px; padding: 0 10px; border: 1px solid #a19f9d; border-radius: 2px; background: #fff; }
.search input { min-width: 0; flex: 1; padding: 0; border: 0; outline: 0; background: none; color: #252423; font: 12px/18px "Open Sans", sans-serif; }
.search input::placeholder { color: #484644; opacity: 1; }
.filters .search { height: 30px; margin: 8px 11px 4px 8px; }
.filter-list { padding: 17px 8px 0; border-top: 1px solid #a19f9d; }
.filter-list h3 { display: flex; justify-content: space-between; padding-right: 4px; white-space: nowrap; }
.drop { height: 46px; margin: 8px 0 27px; padding: 0 4px; border: 1px solid #c8c6c4; border-radius: 2px; line-height: 44px; text-align: center; white-space: nowrap; }

/* page tabs */
.sheets { grid-column: 1 / -1; display: flex; }
.arrows { display: flex; align-items: center; gap: 18px; width: 39px; padding-left: 6px; }
.arrows i { border: 4px solid transparent; border-width: 5px 4px; }
.arrows .prev { border-right-color: #c8c6c4; border-left: 0; }
.arrows .next { border-left-color: #c8c6c4; border-right: 0; }
.sheets button { padding: 0 21px 0 20px; border-right: 1px solid #d2d0ce; }
.sheets button.on { background: #fff; border-left: 1px solid #a19f9d; box-shadow: inset 0 -4px #f2c811; }
.sheets .add { width: 40px; margin: 2px 0 1px; padding: 0; border: 0; background: #f2c811; }

/* visualizations */
.visuals { width: 182px; border-right: 1px solid #e1dfdd; }
.visuals header, .fields header { display: flex; align-items: center; justify-content: space-between; height: 48px; padding: 0 12px; }
.visuals h2, .fields h2 { font-size: 15px; font-weight: 600; color: #3b3a39; }
.viz-grid { display: grid; grid-template-columns: repeat(6, 16px); gap: 8px 12px; padding: 4px 7px; }
.viz-grid svg { width: 16px; height: 16px; overflow: visible; }
.dots { height: 31px; padding-left: 8px; font-size: 16px; line-height: 12px; letter-spacing: 3px; }
.custom { display: flex; gap: 8px; height: 30px; padding: 4px 5px; border: 1px solid #e1dfdd; border-width: 1px 0; border-top-style: dashed; }
.viz-tabs { display: flex; height: 37px; padding: 0 13px; }
.viz-tabs button { display: flex; justify-content: center; width: 40px; padding-top: 8px; border-bottom: 4px solid transparent; }
.viz-tabs .on { border-color: #f2c811; }
.visuals h3 { padding-left: 10px; }
.visuals .values { padding: 5px 0 5px 12px; }
.well { height: 28px; margin: 0 6px 0 5px; padding: 0 10px; border: 1px dashed #c8c6c4; background: #fff; line-height: 26px; white-space: nowrap; }
.visuals .drill { padding: 15px 0 14px 14px; line-height: 20px; }
.toggle { display: flex; align-items: center; gap: 3px; height: 42px; padding: 0 18px; }
.toggle + h3 { margin-top: 6px; }
.toggle input { appearance: none; position: relative; width: 30px; height: 12px; margin: 0; }
.toggle input::before { content: ""; position: absolute; top: 5px; width: 30px; height: 2px; background: #605e5c; }
.toggle input::after { content: ""; position: absolute; left: 0; width: 12px; height: 12px; border: 2px solid #605e5c; border-radius: 50%; background: #f3f2f1; }
.toggle input:checked::after { left: 18px; background: #605e5c; }

/* fields */
.fields { width: 180px; border-right: 1px solid #797775; }
.fields .search { height: 27px; margin: 0 3px 5px 4px; padding: 0 6px; }
.tree { padding-top: 10px; border-top: 1px solid #e1dfdd; }
.tree li { padding-left: 8px; line-height: 24px; white-space: nowrap; }
.tree svg { width: 16px; height: 16px; margin-right: 4px; vertical-align: middle; }
.tree .arr { width: 8px; margin-right: 5px; opacity: .6; }
.tree .down { width: 12px; margin: 0 3px 0 -2px; }
.tree li li { padding-left: 29px; }
.tree label { display: flex; align-items: center; }
.tree input { appearance: none; width: 12px; height: 12px; margin: 0 3px 0 0; border: 1px solid #797775; border-radius: 2px; }

.status { height: 24px; padding-left: 5px; border: 1px solid #d2d0ce; border-width: 1px 0; border-bottom-color: #797775; line-height: 24px; }

/* taskbar */
.taskbar { display: flex; justify-content: space-between; height: 40px; background: #101010; color: #fff; }
.apps, .tray { display: flex; }
.apps button { display: flex; align-items: center; justify-content: center; width: 49px; border-bottom: 2px solid transparent; }
.apps .current { background: #333; border-color: #b8b8b8; }
.apps .open { border-image: linear-gradient(90deg, transparent 4px, #b8b8b8 4px, #b8b8b8 45px, transparent 45px) 2; }
.badge { font-size: 8px; fill: #fff; }
.tray { align-items: center; }
.tray button { display: flex; align-items: center; justify-content: center; width: 32px; }
.tray .pen { width: 40px; }
.lang-sw { width: 38px; text-align: center; }
.clock { width: 64px; line-height: 18px; text-align: center; }
.tray .notes { width: 54px; }
.count { font-size: 12px; fill: #fff; }
```
